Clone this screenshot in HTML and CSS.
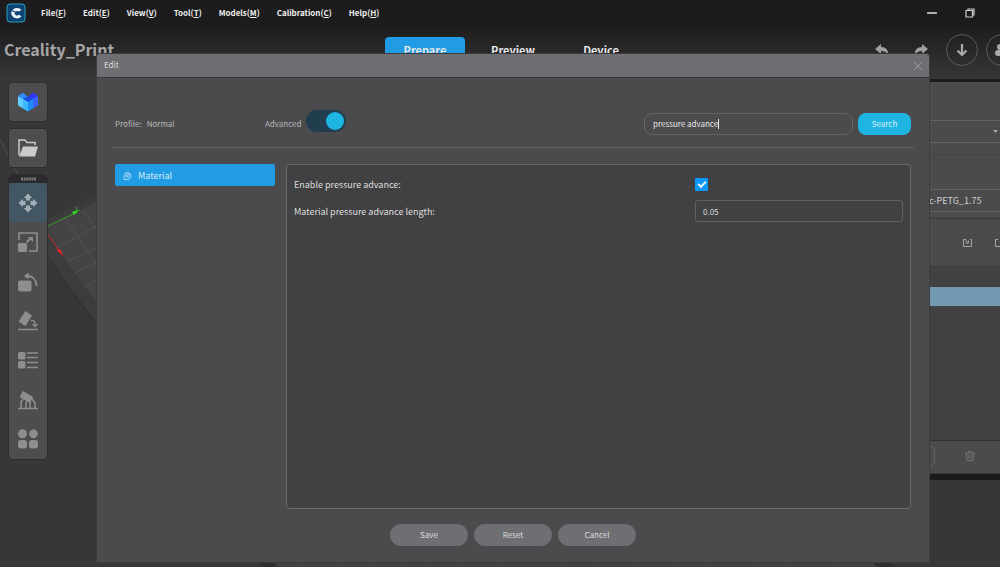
FILE: index.html
```html
<!DOCTYPE html>
<html lang="en">
<head>
<meta charset="utf-8">
<title>Creality Print</title>
<link rel="stylesheet" href="styles.css">
</head>
<body>
<div class="app">
  <svg class="scene" viewBox="0 0 1000 567" preserveAspectRatio="xMinYMin slice" aria-hidden="true">
    <path d="M0 139L18 175" stroke="#505052"/>
    <path d="M47 220L100 193V328L47 256z" fill="#3c3c3e"/>
    <path d="M48 226L100 201V308L48 235z" fill="#444446"/>
    <path d="M65 218L100 270M83 210L100 236M56 248L100 224M66 262L100 246M74 273L100 260M84 287L100 279" stroke="#525254" fill="none"/>
    <path d="M47 256L100 331" stroke="#2e2e30"/>
    <path d="M48 226L75 213M76 207l1 4 3-1M77 211v3" stroke="#35a025" fill="none"/>
    <path d="M72 212l6-2-4 5z" fill="#35e822"/>
    <path d="M48 235L63 256" stroke="#c92424"/>
    <path d="M56 249l5 1 1 5z" fill="#ff2020"/>
    <path d="M258 562H890L894 567H262z" fill="#2f2f31"/>
    <path d="M274 562H872L876 567H278z" fill="#414143"/>
    <path d="M300 567l8-5M340 567l-6-5M366 567l8-5M402 567l8-5M430 567l-6-5M460 567l8-5M494 567l8-5M530 567l-6-5M560 567l8-5M600 567l-6-5M630 567l8-5M670 567l8-5M710 567l-6-5M750 567l8-5M790 567l-6-5M830 567l8-5" stroke="#48484b" fill="none"/>
  </svg>

  <header class="top">
    <div class="menubar">
      <svg class="logo" viewBox="0 0 20 20" aria-label="Creality" role="img">
        <rect x="1" y="1" width="18" height="18" rx="3" fill="#0b4373" stroke="#2b9dbd"/>
        <path d="M15.500 7A5.800 5.200 0 1 0 15.500 13.500L13 11.500A2.400 2.200 0 1 1 12.500 8.500z" fill="#e9f2fa"/>
        <path d="M4 7L9.500 9" stroke="#0b4373" stroke-width="1.200"/>
      </svg>
      <nav class="menus">
        <button>File(<u>F</u>)</button>
        <button>Edit(<u>E</u>)</button>
        <button>View(<u>V</u>)</button>
        <button>Tool(<u>T</u>)</button>
        <button>Models(<u>M</u>)</button>
        <button>Calibration(<u>C</u>)</button>
        <button>Help(<u>H</u>)</button>
      </nav>
      <div class="window-buttons">
        <button aria-label="Minimize"><svg width="10" height="10"><path d="M0 5h10" stroke="#eee" stroke-width="1.400"/></svg></button>
        <button aria-label="Restore"><svg width="10" height="10" fill="none" stroke="#ccc" stroke-width="1.200"><path d="M1 2.500h6.500v6.500H1zM3 2.500V1h6v6H7.500"/></svg></button>
      </div>
    </div>
    <div class="toolbar">
      <div class="brand">Creality_Print</div>
      <nav class="tabs">
        <button class="tab tab-active">Prepare</button>
        <button class="tab">Preview</button>
        <button class="tab">Device</button>
      </nav>
      <div class="actions">
        <button class="plain undo" aria-label="Undo"><svg width="14" height="12" viewBox="0 0 14 12"><path d="M0 5L6 0V3C11 3 13.500 6 13 11C11.500 8 9.500 7 6 7V10z" fill="#a0a0a2"/></svg></button>
        <button class="plain redo" aria-label="Redo"><svg width="14" height="12" viewBox="0 0 14 12"><path d="M14 5L8 0V3C3 3 .5 6 1 11C2.500 8 4.500 7 8 7V10z" fill="#a0a0a2"/></svg></button>
        <button class="round" aria-label="Download"><svg width="12" height="14" viewBox="0 0 12 14" fill="none" stroke="#aaa" stroke-width="2.200"><path d="M6 1V12M1.500 7.500L6 12L10.500 7.500"/></svg></button>
        <button class="round" aria-label="Account"><svg width="14" height="14" viewBox="0 0 14 14" fill="#aaa"><circle cx="5" cy="4" r="3"/><rect x="0" y="7" width="14" height="6" rx="3"/></svg></button>
      </div>
    </div>
  </header>

  <main class="workspace">
    <aside class="tools">
      <button class="tile" aria-label="Models">
        <svg width="20" height="20" viewBox="0 0 20 20"><path d="M0 4L5 6.500V16.500L0 13.500z" fill="#62ccff"/><path d="M5 6.500L10 9.500V19.500L5 16.500z" fill="#3cb8ff"/><path d="M0 4L5 .5L10 5L5 7z" fill="#2f8cff"/><path d="M10 5L15 .5L20 4L15 7z" fill="#3038f5"/><path d="M15 6.500L20 4V13.500L15 16.500z" fill="#3a62ff"/><path d="M10 9.500L15 6.500V16.500L10 19.500z" fill="#1f8cf8"/><path d="M5 6.800L10 4.500L15 6.800L10 9.800z" fill="#1c4ae0"/></svg>
      </button>
      <button class="tile" aria-label="Open file">
        <svg width="20" height="18" viewBox="0 0 20 18"><path d="M1 16V1H7L9 3.500H17V6" fill="none" stroke="#cacaca" stroke-width="1.500"/><path d="M5 7.500H20L17 17.500H1z" fill="#cacaca"/></svg>
      </button>
      <div class="dock">
        <div class="grip"><svg width="15" height="4"><path d="M0 2H15" stroke="#777" stroke-width="3" stroke-dasharray="2 .6"/></svg></div>
        <button class="tool tool-active" aria-label="Move"><svg viewBox="0 0 20 20" fill="#a3afb6"><path d="M10 .5L14.200 5L12 5V7.500H8V5H5.800zM10 19.500L14.200 15H12V12.500H8V15H5.800zM.5 10L5 5.800V8H7.500V12H5V14.200zM19.500 10L15 5.800V8H12.500V12H15V14.200z"/></svg></button>
        <button class="tool" aria-label="Scale"><svg viewBox="0 0 20 20" fill="#8e8e90"><path d="M1 8V1H19V19H11" fill="none" stroke="#8e8e90" stroke-width="1.600"/><rect x="0" y="11" width="9" height="9" rx="1.500"/><path d="M8.500 10.500L13 6" stroke="#8e8e90" stroke-width="2"/><path d="M10 5h5v5z"/></svg></button>
        <button class="tool" aria-label="Rotate"><svg viewBox="0 0 20 20" fill="#8e8e90"><rect x="0" y="8.500" width="13.500" height="11" rx="2"/><path d="M6 4L10.500 0.500V7.500z"/><path d="M9 4C15 4 18.500 8 18.500 14" fill="none" stroke="#8e8e90" stroke-width="1.800"/></svg></button>
        <button class="tool" aria-label="Lay flat"><svg viewBox="0 0 20 20" fill="#8e8e90"><path d="M7.500 0L14 4.500L7.500 15L0.500 10.500z"/><path d="M13 9.500C16 9 17.500 11 17 14.500M14.500 13l2.500 2.500 2.500-2.500" fill="none" stroke="#8e8e90" stroke-width="1.300"/><path d="M0 18.500H20" stroke="#8e8e90" stroke-width="1.500"/></svg></button>
        <button class="tool" aria-label="Arrange"><svg viewBox="0 0 20 20" fill="#8e8e90"><rect x="0" y="2" width="7.500" height="7.500" rx="1.500"/><rect x="0" y="11" width="7.500" height="7.500" rx="1.500"/><path d="M9 3H20M9 7.500H20M9 12.500H20M9 17.500H20" stroke="#8e8e90" stroke-width="1.600"/></svg></button>
        <button class="tool" aria-label="Support"><svg viewBox="0 0 20 20" fill="#8e8e90"><path d="M5 1L15 7L12 13L1.500 7z"/><path d="M0 18.500H20M3 18V12L5 9M8 18V13L9 11M12 18V12M17 18V13L14 9" stroke="#8e8e90" stroke-width="1.500" fill="none"/></svg></button>
        <button class="tool" aria-label="More"><svg viewBox="0 0 20 20" fill="#8e8e90"><circle cx="4.500" cy="4.800" r="4.500"/><path d="M15.500 0L19 2L20 5L18.500 8L15.500 9.500L12.500 8L11 5L12 2z"/><rect x="0" y="11" width="9" height="8.500" rx="3"/><rect x="11" y="11" width="9" height="8.500" rx="3"/></svg></button>
      </div>
    </aside>

    <aside class="settings">
      <div class="section printer"><div class="field field-arrow"><svg width="5" height="3"><path d="M0 0H5L2.500 3z" fill="#aaa"/></svg></div></div>
      <div class="section material"><div class="field">c-PETG_1.75</div></div>
      <div class="section icons">
        <svg width="9" height="9" fill="none" stroke="#a5a5a5"><path d="M3 1.500H.5V8.500H8.500V1.500H7M2 1L5 5M5.500 2.500V5H2.500"/></svg>
        <svg width="9" height="9" fill="none" stroke="#a5a5a5"><path d="M3 1.500H.5V8.500H8.500V1.500H6"/></svg>
      </div>
      <div class="list"><div class="row-selected"></div></div>
      <div class="section list-actions">
        <span class="chip"></span>
        <svg width="10" height="12" viewBox="0 0 12 13" fill="none" stroke="#747476" stroke-width="1.200"><path d="M0 3H12M4 2.500V1H8V2.500M1.500 3L2.500 12H9.500L10.500 3M4.500 5V10M7.500 5V10"/></svg>
      </div>
    </aside>
  </main>

  <section class="dialog" role="dialog" aria-labelledby="dialog-title">
    <div class="dialog-head">
      <h1 id="dialog-title">Edit</h1>
      <button class="plain" aria-label="Close"><svg width="8" height="8"><path d="M0 0L8 8M8 0L0 8" stroke="#98989d"/></svg></button>
    </div>
    <div class="filter">
      <div class="profile"><span>Profile:</span><span>Normal</span></div>
      <label class="advanced"><span>Advanced</span><input class="switch" type="checkbox" role="switch" checked></label>
      <form class="search">
        <div class="search-box">
          <input type="text" aria-label="Search settings" value="pressure advance">
          <span class="caret"></span>
        </div>
        <button type="button">Search</button>
      </form>
    </div>
    <div class="dialog-body">
      <nav class="categories">
        <button class="category"><svg width="9" height="9" viewBox="0 0 9 9" fill="none" stroke="#c5e5fa" stroke-width=".8"><path d="M1 8.500V4.500A3.500 3.500 0 1 1 4.500 8.500H1"/><circle cx="4.500" cy="4.500" r="1.700"/><path d="M3 6L6 3"/></svg>Material</button>
      </nav>
      <div class="params">
        <label for="enable-pa">Enable pressure advance:</label>
        <input id="enable-pa" class="check" type="checkbox" checked>
        <label for="pa-length">Material pressure advance length:</label>
        <input id="pa-length" class="number" type="text" value="0.05">
      </div>
    </div>
    <div class="dialog-foot">
      <button>Save</button>
      <button>Reset</button>
      <button>Cancel</button>
    </div>
  </section>
</div>
</body>
</html>
```
FILE: styles.css
```css
* { box-sizing: border-box; }
body {
  margin: 0;
  font-family: "Noto Sans CJK SC", "Noto Sans", sans-serif;
  font-size: 8px;
  color: #dedede;
  background: #373739;
}
button, input {
  font: inherit;
  color: inherit;
  margin: 0;
}
button {
  padding: 0;
  border: 0;
  background: none;
}
svg { display: block; flex: none; }
.app {
  position: relative;
  height: 100vh;
  overflow: hidden;
  display: flex;
  flex-direction: column;
}
.scene {
  position: absolute;
  inset: 0;
  width: 100%;
  height: 100%;
}

/* Title bar and main toolbar */
.top {
  height: 79px;
  flex: none;
  overflow: hidden;
  background: linear-gradient(#1c1c1c 26px, #373739 79px);
}
.menubar {
  display: flex;
  align-items: center;
  height: 26px;
  padding: 0 25px 0 6px;
}
.logo { width: 20px; height: 20px; }
.menus {
  display: flex;
  gap: 17px;
  margin-left: 15px;
  padding-bottom: 2px;
  font-weight: 700;
  color: #eee;
}
.window-buttons {
  display: flex;
  gap: 28px;
  margin-left: auto;
}
.toolbar {
  display: grid;
  grid-template-columns: 38.5% auto 1fr;
  align-items: start;
  padding-top: 11px;
}
.brand {
  padding-left: 4px;
  font-size: 16px;
  font-weight: 700;
  line-height: 24px;
  color: #a6a6a7;
}
.tabs { display: flex; gap: 8px; }
.tab {
  width: 80px;
  height: 26px;
  border-radius: 4px 4px 0 0;
  font-size: 11px;
  font-weight: 700;
  color: #e6e6e6;
}
.tab-active { background: #209be4; }
.actions {
  display: flex;
  justify-content: flex-end;
  align-items: center;
  margin: -3px -18px 0 0;
}
.undo { margin-right: 25px; }
.redo { margin-right: 18px; }
.round {
  display: grid;
  place-items: center;
  width: 32px;
  height: 32px;
  border: 1px solid #5a5a5c;
  border-radius: 50%;
}
.round + .round { margin-left: 8px; }

/* Workspace */
.workspace {
  position: relative;
  flex: 1;
  display: flex;
  justify-content: space-between;
  align-items: flex-start;
}
.tools {
  display: flex;
  flex-direction: column;
  gap: 8px;
  padding: 4px 0 0 9px;
}
.tile {
  display: grid;
  place-items: center;
  width: 38px;
  height: 38px;
  border-radius: 3px;
  background: #4d4d4f;
  box-shadow: 0 0 0 1px #2e2e30;
}
.dock {
  display: flex;
  flex-direction: column;
  width: 38px;
  height: 284px;
  border-radius: 4px;
  background: #4d4d4f;
  box-shadow: 0 0 0 1px #2e2e30;
}
.grip {
  display: grid;
  place-items: center;
  height: 8px;
  border-radius: 4px 4px 0 0;
  background: #2b2b2d;
}
.tool {
  display: grid;
  place-items: center;
  flex: 1;
  width: 100%;
  border-radius: 3px;
}
.tool svg { width: 20px; height: 20px; }
.tool-active { background: #435663; }

/* Printer and material column */
.settings {
  width: 71px;
  overflow: hidden;
  border-top: 3px solid #1b1b1c;
  border-bottom: 6px solid #1b1b1b;
  background: #414143;
}
.section {
  background: #4b4b4d;
  border-bottom: 1px solid #38383a;
}
.printer { padding: 38px 0 11px; border-bottom-color: #444446; }
.material { padding: 34px 0 6px; }
.field {
  display: flex;
  align-items: center;
  height: 23px;
  border: solid #626264;
  border-width: 1px 0;
  font-size: 9px;
  color: #d0d0d0;
}
.field-arrow { justify-content: flex-end; padding-right: 2px; }
.icons {
  display: flex;
  align-items: center;
  justify-content: space-between;
  height: 48px;
  padding-left: 34px;
  margin-right: -4px;
}
.list {
  height: 174px;
  padding-top: 20px;
  border-bottom: 1px solid #303032;
}
.row-selected { height: 19px; background: #7399b1; }
.list-actions {
  display: flex;
  align-items: center;
  gap: 30px;
  height: 33px;
  padding-bottom: 2px;
}
.chip {
  width: 6px;
  height: 20px;
  border: 1px solid #626264;
  border-left: 0;
  border-radius: 0 5px 5px 0;
}

/* Edit dialog */
.dialog {
  position: absolute;
  inset: 54px 71px 5px 97px;
  display: flex;
  flex-direction: column;
  border-radius: 3px 3px 0 0;
  background: #4b4b4d;
  box-shadow: 0 0 0 1px #3c3c3e;
}
.dialog-head {
  display: flex;
  align-items: center;
  justify-content: space-between;
  height: 24px;
  padding: 0 7px;
  border-bottom: 1px solid #3a3a3c;
  border-radius: 3px 3px 0 0;
  background: #6e6e73;
}
.dialog-head h1 {
  margin: 0;
  padding-bottom: 2px;
  font-size: 8px;
  font-weight: 400;
}
.filter {
  display: flex;
  align-items: center;
  height: 70px;
  margin: 0 15px;
  padding: 22px 3px 0;
  border-bottom: 1px solid #606062;
  color: #b8b8b8;
}
.profile {
  display: flex;
  gap: 5px;
  width: 150px;
}
.advanced {
  display: flex;
  align-items: center;
  gap: 5px;
}
.switch {
  appearance: none;
  display: flex;
  justify-content: flex-end;
  width: 40px;
  height: 22px;
  margin-bottom: 6px;
  padding: 2px;
  border-radius: 11px;
  background: #213e4e;
}
.switch::before {
  content: "";
  width: 18px;
  height: 18px;
  border-radius: 50%;
  background: #1fb5e3;
}
.search {
  display: flex;
  gap: 5px;
  margin-left: auto;
}
.search-box { position: relative; }
.search input {
  display: block;
  width: 209px;
  height: 22px;
  padding: 0 8px;
  border: 1px solid #656567;
  border-radius: 8px;
  background: transparent;
  color: #e4e4e4;
}
.caret {
  position: absolute;
  left: 74px;
  top: 6px;
  width: 1px;
  height: 10px;
  background: #e4e4e4;
}
.search button {
  width: 53px;
  border-radius: 8px;
  background: #1fb5e3;
  color: #d5eff8;
}
.dialog-body {
  flex: 1;
  display: flex;
  gap: 11px;
  padding: 16px 18px 0;
}
.categories { width: 160px; }
.category {
  display: flex;
  align-items: center;
  gap: 6px;
  width: 100%;
  height: 22px;
  padding: 0 8px;
  border-radius: 2px;
  background: #209be4;
  font-size: 9px;
  color: #d5ecfa;
}
.params {
  flex: 1;
  display: grid;
  grid-template-columns: 1fr 208px;
  grid-auto-rows: 22px;
  row-gap: 5px;
  align-items: center;
  align-content: start;
  padding: 8px 7px;
  border: 1px solid #6a6a6c;
  border-radius: 4px;
  background: #414143;
  font-size: 9px;
}
.check {
  appearance: none;
  display: grid;
  place-items: center;
  width: 13px;
  height: 13px;
  border-radius: 1px;
  background: #0a98fb;
}
.check::before {
  content: "";
  width: 6px;
  height: 3px;
  margin-bottom: 2px;
  border: solid #e8f4ff;
  border-width: 0 0 2px 2px;
  transform: rotate(-45deg);
}
.number {
  height: 22px;
  padding: 0 7px;
  border: 1px solid #606062;
  border-radius: 3px;
  background: transparent;
  font-size: 8px;
}
.dialog-foot {
  display: flex;
  justify-content: center;
  gap: 6px;
  padding: 15px 0 16px;
}
.dialog-foot button {
  width: 78px;
  height: 22px;
  padding-bottom: 1px;
  border-radius: 11px;
  background: #6e6e73;
}
```
